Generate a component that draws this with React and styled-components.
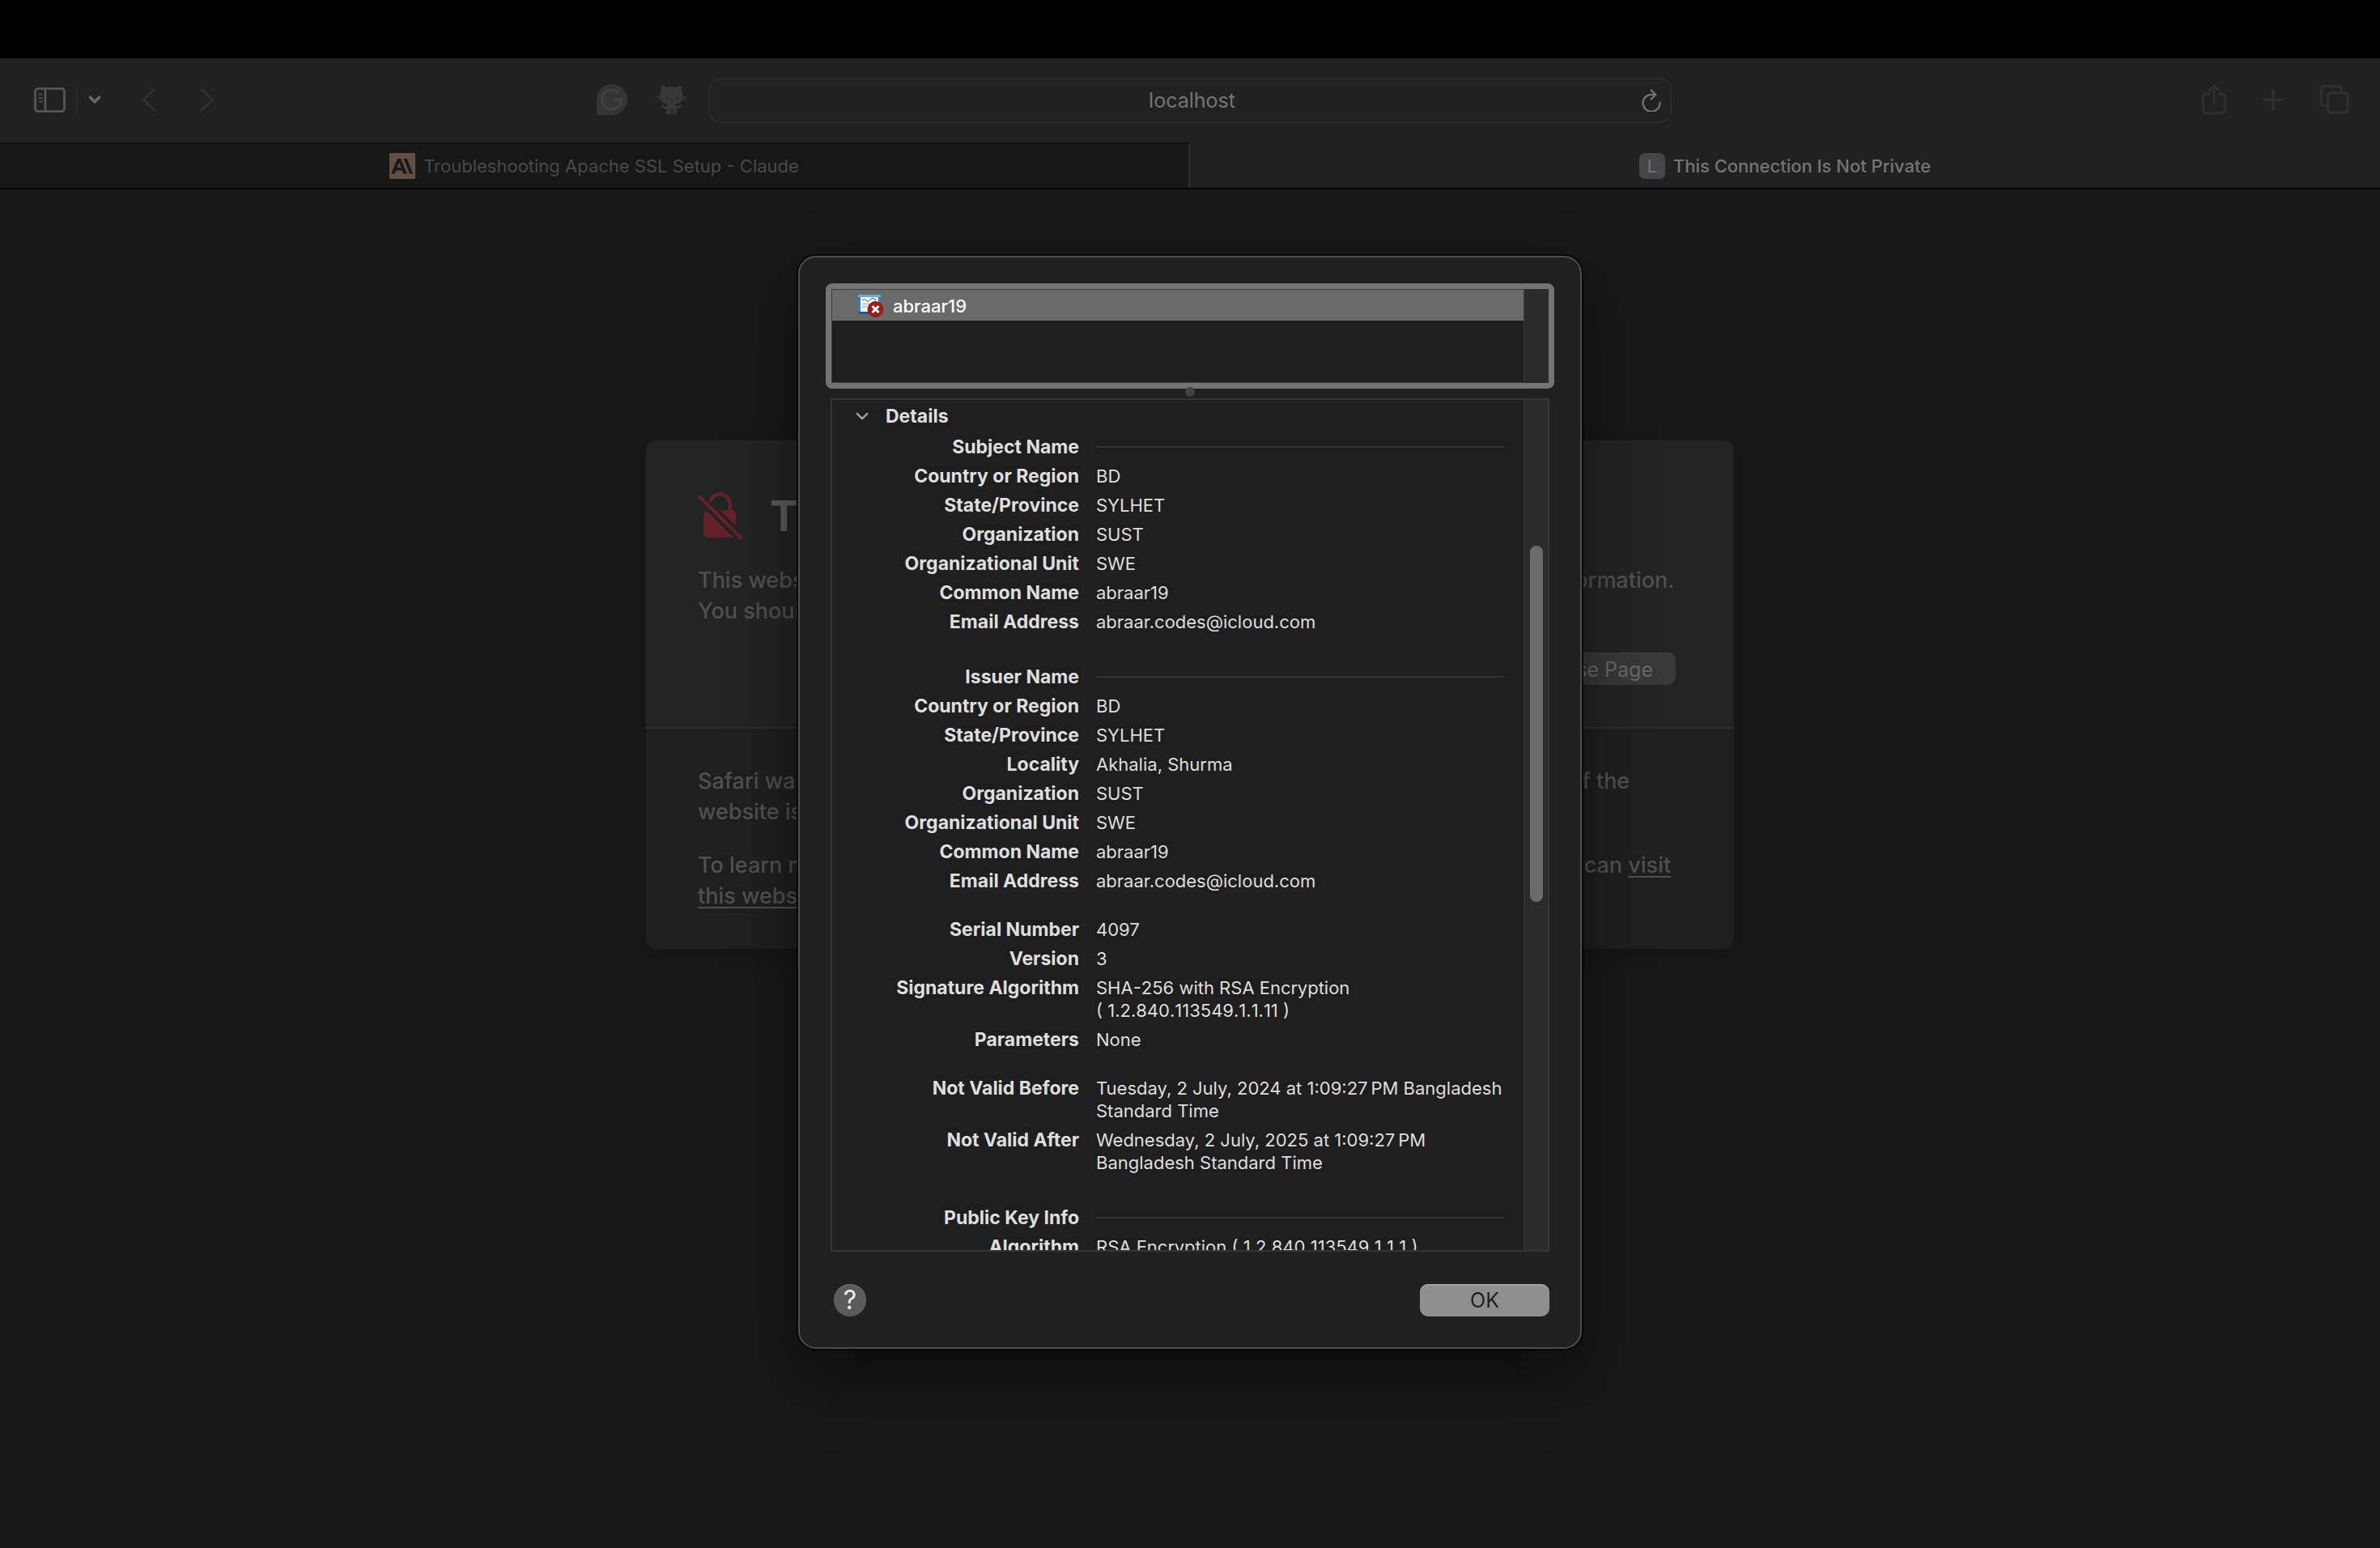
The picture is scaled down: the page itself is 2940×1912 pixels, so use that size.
import React from 'react';
import styled, { createGlobalStyle } from 'styled-components';

const Global = createGlobalStyle`
  *, *::before, *::after { box-sizing: border-box; }
  body { margin: 0; background: #181818; font-family: Inter, "Liberation Sans", sans-serif; font-size: 22px; color: #dedede; }
  button, input { font-family: inherit; }
  h1, h2, p, dl, dd, dt, ul { margin: 0; padding: 0; }
`;

const Window = styled.div`
  min-height: 100vh;
  display: flex;
  flex-direction: column;
  border-top: 72px solid #000;
`;

const Toolbar = styled.header`
  height: 104px;
  padding: 0 38px;
  display: grid;
  grid-template-columns: 1fr 1190px 1fr;
  align-items: center;
  background: #212121;
`;

const ToolSide = styled.div`
  display: flex;
  align-items: center;
  justify-content: ${(p) => (p.$right ? 'flex-end' : 'space-between')};
  padding: ${(p) => (p.$right ? '0 0 2px' : '0 26px 2px 4px')};
`;

const ToolGroup = styled.div`
  display: flex;
  align-items: center;
  gap: ${(p) => p.$gap}px;
`;

const IconButton = styled.button`
  border: 0;
  padding: 0;
  background: none;
  display: flex;
  color: ${(p) => p.$color || '#2f2f2f'};
  svg { display: block; }
`;

const Separator = styled.span`
  width: 2px;
  height: 36px;
  background: #2b2b2b;
`;

const AddressBar = styled.div`
  height: 56px;
  border: 2px solid #2a2a2a;
  border-radius: 16px;
  display: grid;
  grid-template-columns: 40px 1fr 24px;
  align-items: center;
  padding: 0 11px 0 0;
`;

const AddressInput = styled.input`
  grid-column: 2;
  width: 100%;
  border: 0;
  padding: 0;
  background: none;
  outline: 0;
  text-align: center;
  font-size: 25px;
  line-height: 32px;
  color: #757575;
`;

const TabBar = styled.nav`
  display: grid;
  grid-template-columns: 1fr 1fr;
  height: 58px;
  border-bottom: 2px solid #060606;
`;

const Tab = styled.a`
  display: flex;
  align-items: center;
  justify-content: center;
  gap: 10px;
  font-size: 22px;
  line-height: 28px;
  text-decoration: none;
  font-weight: ${(p) => (p.$active ? 500 : 400)};
  color: ${(p) => (p.$active ? '#757575' : '#494949')};
  background: ${(p) => (p.$active ? '#212121' : '#171717')};
  border-top: 1px solid ${(p) => (p.$active ? '#212121' : '#0c0c0c')};
  border-right: ${(p) => (p.$active ? '0' : '2px solid #2a2a2a')};
`;

const LetterIcon = styled.span`
  width: 32px;
  height: 32px;
  border-radius: 7px;
  background: #45454a;
  color: #777;
  font-size: 21px;
  font-weight: 400;
  line-height: 34px;
  text-align: center;
`;

const Stage = styled.div`
  flex: 1;
  display: grid;
  justify-items: center;
  align-items: start;
`;

const WarningCard = styled.main`
  grid-area: 1 / 1;
  width: 1344px;
  margin-top: 310px;
  border-radius: 12px;
  overflow: hidden;
  background: #1f1f1f;
  color: #505050;
  font-size: 27px;
  font-weight: 500;
  line-height: 38px;
  box-shadow: 0 6px 24px rgba(0, 0, 0, 0.2);
`;

const WarningHead = styled.section`
  height: 356px;
  padding: 62px 64px 0;
  background: #222424;
  border-bottom: 2px solid #2c2e2e;
`;

const WarningTitle = styled.h1`
  display: flex;
  align-items: center;
  gap: 33px;
  font-size: 52px;
  line-height: 64px;
  color: #5c5c5c;
  margin-bottom: 28px;
`;

const WarningBody = styled.section`
  height: 272px;
  padding: 46px 64px 0;
`;

const Paragraph = styled.p`
  margin-bottom: 28px;
`;

const TextLink = styled.a`
  color: inherit;
  text-decoration: underline;
  text-decoration-thickness: 2px;
  text-underline-offset: 4px;
`;

const CardActions = styled.div`
  display: flex;
  justify-content: flex-end;
  margin-top: 32px;
  padding-right: 8px;
`;

const PageButton = styled.button`
  height: 40px;
  padding: 0 28px;
  border: 0;
  border-top: 1px solid #444;
  border-radius: 10px;
  background: #383838;
  color: #686868;
  font-size: 25px;
  line-height: 38px;
`;

const Dialog = styled.section`
  grid-area: 1 / 1;
  position: relative;
  width: 968px;
  margin-top: 82px;
  padding: 32px 32px 38px;
  border: 2px solid #4e4e4e;
  border-radius: 22px;
  background: #202020;
  box-shadow: 0 0 0 2px #080808, 0 36px 80px rgba(0, 0, 0, 0.5);
`;

const CertList = styled.div`
  height: 130px;
  border: 7px solid #747474;
  border-radius: 8px;
  display: grid;
  grid-template-columns: 1fr 31px;
  background: #1e1e1e;
`;

const CertRows = styled.ul`
  list-style: none;
  border: 1px solid #3c3c3c;
  border-right: 0;
`;

const CertRow = styled.li`
  height: 38px;
  padding: 1px 0 0 32px;
  display: flex;
  align-items: center;
  gap: 11px;
  background: #6a6a6a;
  color: #fff;
  font-weight: 500;
  line-height: 28px;
`;

const Track = styled.div`
  background: #2b2b2b;
  border-left: 1px solid #3d3d3d;
`;

const Thumb = styled.div`
  height: 440px;
  margin: 180px 6px 0 7px;
  border-radius: 8px;
  background: #6b6b6b;
`;

const Splitter = styled.div`
  height: 12px;
  display: flex;
  justify-content: center;
  align-items: flex-start;
`;

const SplitDot = styled.span`
  width: 12px;
  height: 12px;
  margin-top: -2px;
  border-radius: 50%;
  background: #414141;
`;

const DetailsPanel = styled.div`
  height: 1054px;
  margin: 0 6px;
  border: 2px solid #353535;
  background: #1e1e1e;
  display: grid;
  grid-template-columns: 1fr 30px;
  overflow: hidden;
`;

const DetailsBody = styled.div`
  padding: 6px 24px 0 28px;
  height: 1050px;
  overflow: hidden;
`;

const DetailsToggle = styled.button`
  display: flex;
  align-items: center;
  gap: 20px;
  border: 0;
  padding: 0;
  margin-bottom: 10px;
  background: none;
  color: #dedede;
  font-size: 23px;
  font-weight: 700;
  line-height: 28px;
  svg { color: #a0a0a0; }
`;

const Fields = styled.dl`
  display: flex;
  flex-direction: column;
  gap: 8px;
  line-height: 28px;
`;

const Field = styled.div`
  display: grid;
  grid-template-columns: 277px 1fr;
  column-gap: 21px;
  margin-top: ${(p) => p.$space || 0}px;
`;

const FieldName = styled.dt`
  font-size: 23px;
  font-weight: 700;
  text-align: right;
`;

const FieldValue = styled.dd`
  white-space: pre;
  font-kerning: ${(p) => (p.$oid ? 'none' : 'auto')};
`;

const Rule = styled.dd`
  align-self: center;
  height: 2px;
  background: #343434;
`;

const Footer = styled.footer`
  display: flex;
  justify-content: space-between;
  padding: 40px 6px 0 10px;
`;

const HelpButton = styled.button`
  width: 40px;
  height: 40px;
  padding: 0;
  border: 0;
  border-radius: 50%;
  background: #5b5b5b;
  color: #ececec;
  font-size: 32px;
  font-weight: 400;
  line-height: 40px;
  box-shadow: inset 0 1px 0 #707070;
`;

const OkButton = styled.button`
  width: 160px;
  height: 40px;
  padding: 0;
  border: 0;
  border-radius: 10px;
  background: #8f8f8f;
  color: #1f1f1f;
  font-size: 25px;
  line-height: 38px;
  box-shadow: inset 0 2px 0 #a2a2a2;
`;

const stroke = (w) => ({ fill: 'none', stroke: 'currentColor', strokeWidth: w, strokeLinecap: 'round', strokeLinejoin: 'round' });

const SidebarIcon = () => (
  <svg width="39" height="31" viewBox="0 0 39 31" {...stroke(2.6)}>
    <rect x="1.5" y="1.5" width="36" height="28" rx="3.5" />
    <path d="M14 2v27" />
    <path d="M6 8.5h4M6 13h4M6 17.500h4" strokeWidth="1.6" />
  </svg>
);
const SmallChevron = ({ w = 3.6, width = 16, height = 10 }) => (
  <svg width={width} height={height} viewBox="0 0 16 10" {...stroke(w)}><path d="M2.500 2.200L8 7.800l5.500-5.600" /></svg>
);
const BackIcon = () => (
  <svg width="18" height="30" viewBox="0 0 18 30" {...stroke(3)}><path d="M16 2L2.500 15 16 28" /></svg>
);
const ForwardIcon = () => (
  <svg width="18" height="30" viewBox="0 0 18 30" {...stroke(3)}><path d="M2 2l13.500 13L2 28" /></svg>
);
const BubbleIcon = () => (
  <svg width="38" height="38" viewBox="0 0 38 38">
    <path d="M0 38V19a19 19 0 1 1 19 19z" fill="#353535" />
    <path d="M26.500 10A12 12 0 1 0 30.500 19.200H22" fill="none" stroke="#424242" strokeWidth="3" strokeLinecap="round" />
  </svg>
);
const OctocatIcon = () => (
  <svg width="38" height="37" viewBox="0 0 38 37">
    <path fill="#383838" d="M7.600.6c1.900 0 3.600 1 5 2.100 4.200-.7 8.600-.7 12.800 0 1.400-1.100 3.100-2.100 5-2.100.7 2 .8 4 .3 6 1.700 2 2.300 4.500 2 7.600-.5 6-4.500 8.900-9.700 9.600 1.100 1 1.500 2.200 1.600 3.400 2.500-.2 3-2.900 6.600-3.300-.3 3-3 5.500-6.400 5.800V35l1.600 1.500h-5V29h-.7v7.500h-1.600L19.600 35v-6h-1.200v6l-.5 1.500h-1.600V29h-.7v7.500h-5l1.600-1.500v-5.300c-3.400-.3-6.100-2.800-6.400-5.800 3.600.4 4.100 3.100 6.600 3.300.1-1.200.5-2.400 1.600-3.400-5.200-.7-9.200-3.600-9.700-9.600-.3-3.100.3-5.600 2-7.600-.5-2-.4-4 .3-6z" />
    <path d="M0 14.500l6 .6M1.500 18l5-1.100M38 14.500l-6 .6M36.500 18l-5-1.100" stroke="#383838" strokeWidth="1.200" />
    <circle cx="13" cy="16.500" r="1.300" fill="#262626" /><circle cx="25" cy="16.500" r="1.300" fill="#262626" />
    <path d="M17 17.800l2 1.400 2-1.400" fill="none" stroke="#262626" />
  </svg>
);
const ReloadIcon = () => (
  <svg width="24" height="28" viewBox="0 0 24 28" {...stroke(2.2)}>
    <path d="M22.500 16.500A10.500 10.500 0 1 1 12 6.800h5" /><path d="M11.500 1.400l5.800 5.600-5.800 5.600" />
  </svg>
);
const ShareIcon = () => (
  <svg width="30" height="38" viewBox="0 0 30 38" {...stroke(2.8)}>
    <path d="M9 12H5a3.300 3.300 0 0 0-3.300 3.300v17.500A3.300 3.300 0 0 0 5 36h20a3.300 3.300 0 0 0 3.300-3.200V15.300A3.300 3.300 0 0 0 25 12h-4" />
    <path d="M15 23V2M9 7.500L15 1.700l6 5.800" />
  </svg>
);
const PlusIcon = () => (
  <svg width="28" height="28" viewBox="0 0 28 28" {...stroke(3)}><path d="M14 2v24M2 14h24" /></svg>
);
const TabsIcon = () => (
  <svg width="36" height="36" viewBox="0 0 36 36" {...stroke(2.8)}>
    <rect x="9.500" y="9.500" width="24.500" height="24.500" rx="3.500" />
    <path d="M8 26H5a3.500 3.500 0 0 1-3.500-3.500V5A3.500 3.500 0 0 1 5 1.500h17.500A3.500 3.500 0 0 1 26 5v3" />
  </svg>
);
const ClaudeIcon = () => (
  <svg width="32" height="32" viewBox="0 0 32 32">
    <rect width="32" height="32" rx="1" fill="#634f41" />
    <path fill="#1a1a1a" fillRule="evenodd" d="M9.800 7h4.400l7.600 18.500h-4.300l-1.500-4H8.200l-1.500 4H2.400zM12 11.500L9.500 18h5z" />
    <path fill="#1a1a1a" d="M17.500 7h4.200l7.600 18.500h-4.200z" />
  </svg>
);
const LockIcon = () => (
  <svg width="56" height="60" viewBox="0 1 56 60">
    <path d="M15.500 12.500A12.300 12.300 0 0 1 39.700 15.500V24" fill="none" stroke="#64212a" strokeWidth="4.600" />
    <path fill="#64212a" d="M27 23h15a5 5 0 0 1 5 5v15zM11.500 24.500L44 57H12a5 5 0 0 1-5-5V28a5 5 0 0 1 4.500-3.500z" />
    <path d="M2.500 7l50.500 50" stroke="#64212a" strokeWidth="4.200" strokeLinecap="round" />
  </svg>
);
const CertificateIcon = () => (
  <svg width="32" height="30" viewBox="0 0 32 30">
    <path fill="#2f7fc4" d="M0 1h28v24H0z" />
    <path fill="#56b4e4" d="M0 1h28v3H0z" />
    <path fill="#2356a4" d="M0 22h28v3H0z" />
    <rect x="3" y="4" width="22" height="18" fill="#f4f4f4" />
    <path d="M5 8q3-3 5 0t5-1 7 1" stroke="#555" fill="none" />
    <path d="M5 12.500h9M5 16h6" stroke="#9cc0e0" strokeWidth="1.500" />
    <circle cx="21.500" cy="19" r="10" fill="#9b1c14" />
    <path d="M17.500 15l8 8m0-8l-8 8" stroke="#fff" strokeWidth="3" />
  </svg>
);

const fields = [
  { name: 'Subject Name', heading: true },
  { name: 'Country or Region', value: 'BD' },
  { name: 'State/Province', value: 'SYLHET' },
  { name: 'Organization', value: 'SUST' },
  { name: 'Organizational Unit', value: 'SWE' },
  { name: 'Common Name', value: 'abraar19' },
  { name: 'Email Address', value: 'abraar.codes@icloud.com' },
  { name: 'Issuer Name', heading: true, space: 32 },
  { name: 'Country or Region', value: 'BD' },
  { name: 'State/Province', value: 'SYLHET' },
  { name: 'Locality', value: 'Akhalia, Shurma' },
  { name: 'Organization', value: 'SUST' },
  { name: 'Organizational Unit', value: 'SWE' },
  { name: 'Common Name', value: 'abraar19' },
  { name: 'Email Address', value: 'abraar.codes@icloud.com' },
  { name: 'Serial Number', value: '4097', space: 24 },
  { name: 'Version', value: '3' },
  { name: 'Signature Algorithm', value: 'SHA-256 with RSA Encryption\n( 1.2.840.113549.1.1.11 )', oid: true },
  { name: 'Parameters', value: 'None' },
  { name: 'Not Valid Before', value: 'Tuesday, 2 July, 2024 at 1:09:27\u202fPM Bangladesh\nStandard Time', space: 24 },
  { name: 'Not Valid After', value: 'Wednesday, 2 July, 2025 at 1:09:27\u202fPM\nBangladesh Standard Time' },
  { name: 'Public Key Info', heading: true, space: 32 },
  { name: 'Algorithm', value: 'RSA Encryption ( 1.2.840.113549.1.1.1 )', oid: true },
];

export default function App() {
  return (
    <Window>
      <Global />
      <Toolbar>
        <ToolSide>
          <ToolGroup $gap={50}>
            <ToolGroup $gap={13}>
              <IconButton aria-label="Show sidebar" $color="#595959"><SidebarIcon /></IconButton>
              <Separator />
              <IconButton aria-label="Tab groups" $color="#686868"><SmallChevron /></IconButton>
            </ToolGroup>
            <ToolGroup $gap={54}>
              <IconButton aria-label="Back"><BackIcon /></IconButton>
              <IconButton aria-label="Forward"><ForwardIcon /></IconButton>
            </ToolGroup>
          </ToolGroup>
          <ToolGroup $gap={36}>
            <IconButton aria-label="Writing assistant"><BubbleIcon /></IconButton>
            <IconButton aria-label="Code hosting"><OctocatIcon /></IconButton>
          </ToolGroup>
        </ToolSide>
        <AddressBar>
          <AddressInput aria-label="Address" defaultValue="localhost" />
          <IconButton aria-label="Reload" $color="#757575"><ReloadIcon /></IconButton>
        </AddressBar>
        <ToolSide $right>
          <ToolGroup $gap={44}>
            <IconButton aria-label="Share"><ShareIcon /></IconButton>
            <IconButton aria-label="New tab"><PlusIcon /></IconButton>
            <IconButton aria-label="Tab overview"><TabsIcon /></IconButton>
          </ToolGroup>
        </ToolSide>
      </Toolbar>
      <TabBar>
        <Tab href="#claude"><ClaudeIcon />Troubleshooting Apache SSL Setup - Claude</Tab>
        <Tab href="#local" $active><LetterIcon>L</LetterIcon>This Connection Is Not Private</Tab>
      </TabBar>
      <Stage>
        <WarningCard>
          <WarningHead>
            <WarningTitle><LockIcon />This Connection Is Not Private</WarningTitle>
            <p>
              This website may be impersonating “localhost” to steal your personal or financial information.
              You should close this page.
            </p>
            <CardActions><PageButton>Close Page</PageButton></CardActions>
          </WarningHead>
          <WarningBody>
            <Paragraph>
              Safari warns you when a website has a certificate that is not valid. This may happen if the
              website is misconfigured or an attacker has compromised your connection.
            </Paragraph>
            <Paragraph>
              To learn more, you can view the certificate. If you understand the risks involved, you
              can <TextLink href="#visit">visit this website</TextLink>.
            </Paragraph>
          </WarningBody>
        </WarningCard>
        <Dialog role="dialog" aria-label="Certificate">
          <CertList>
            <CertRows>
              <CertRow><CertificateIcon />abraar19</CertRow>
            </CertRows>
            <Track />
          </CertList>
          <Splitter><SplitDot /></Splitter>
          <DetailsPanel>
            <DetailsBody>
              <DetailsToggle aria-expanded="true"><SmallChevron w={2.2} width={18} height={12} />Details</DetailsToggle>
              <Fields>
                {fields.map((f, i) => (
                  <Field key={i} $space={f.space}>
                    <FieldName>{f.name}</FieldName>
                    {f.heading ? <Rule /> : <FieldValue $oid={f.oid}>{f.value}</FieldValue>}
                  </Field>
                ))}
              </Fields>
            </DetailsBody>
            <Track><Thumb /></Track>
          </DetailsPanel>
          <Footer>
            <HelpButton aria-label="Help">?</HelpButton>
            <OkButton>OK</OkButton>
          </Footer>
        </Dialog>
      </Stage>
    </Window>
  );
}
